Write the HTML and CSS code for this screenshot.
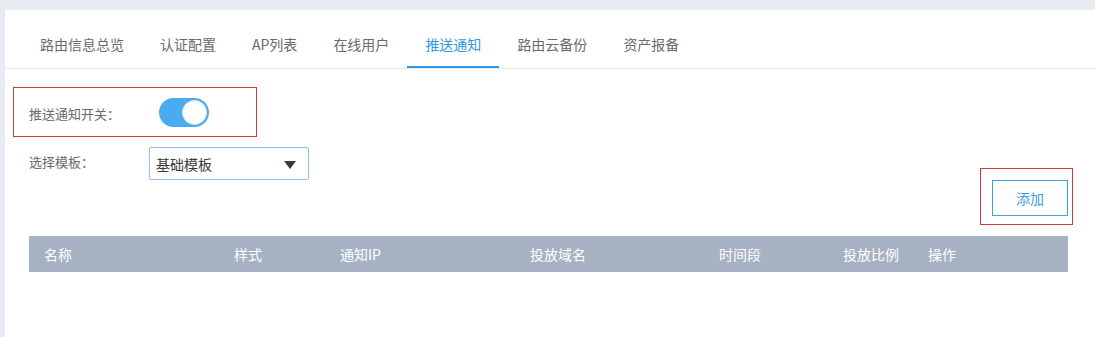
FILE: index.html
```html
<!DOCTYPE html>
<html lang="zh-CN">
<head>
<meta charset="utf-8">
<title>推送通知</title>
<link rel="stylesheet" href="styles.css">
</head>
<body>
<div class="panel">
  <nav class="tabs">
    <a class="tab">路由信息总览</a>
    <a class="tab">认证配置</a>
    <a class="tab">AP列表</a>
    <a class="tab">在线用户</a>
    <a class="tab active">推送通知</a>
    <a class="tab">路由云备份</a>
    <a class="tab">资产报备</a>
  </nav>
  <div class="toolbar">
    <div class="form">
      <div class="row switch-row">
        <span class="label label-switch">推送通知开关：</span>
        <span class="toggle"><span class="knob"></span></span>
      </div>
      <div class="row select-row">
        <span class="label label-select">选择模板：</span>
        <div class="select">
          <span class="select-text">基础模板</span>
          <span class="caret"></span>
        </div>
      </div>
    </div>
    <div class="add-wrap">
      <div class="add-box">
        <button class="add-btn">添加</button>
      </div>
    </div>
  </div>
  <div class="table-head">
    <span>名称</span>
    <span>样式</span>
    <span>通知IP</span>
    <span>投放域名</span>
    <span>时间段</span>
    <span>投放比例</span>
    <span>操作</span>
  </div>
</div>
</body>
</html>
```

FILE: styles.css
```css
html, body {
  margin: 0;
  padding: 0;
  height: 100%;
}
body {
  background: #e8ebf1;
  font-family: "Noto Sans CJK SC", "Noto Sans", sans-serif;
  padding: 10px 0 0 5px;
  box-sizing: border-box;
  overflow: hidden;
}
.panel {
  background: #ffffff;
  height: 100%;
}
.tabs {
  display: flex;
  padding: 12px 0 0 17px;
  border-bottom: 1px solid #e6e8ec;
}
.tab {
  padding: 0 18px;
  font-size: 14px;
  line-height: 44px;
  color: #6a6a6a;
  border-bottom: 2px solid transparent;
  white-space: nowrap;
}
.tab.active {
  color: #2e9ae6;
  border-bottom-color: #2e9ae6;
}
.toolbar {
  display: flex;
  justify-content: space-between;
  padding-top: 18px;
}
.form {
  display: flex;
  flex-direction: column;
  gap: 10px;
}
.row {
  display: flex;
  align-items: center;
}
.switch-row {
  margin-left: 8px;
  width: 244px;
  height: 50px;
  box-sizing: border-box;
  border: 1px solid #cf3a3f;
  padding-left: 15px;
}
.select-row {
  margin-left: 24px;
}
.label {
  font-size: 13px;
  color: #6a6a6a;
  white-space: nowrap;
}
.label-switch {
  width: 130px;
  padding-top: 2px;
}
.label-select {
  width: 120px;
  align-self: flex-start;
  padding-top: 5px;
}
.toggle {
  display: flex;
  align-items: center;
  justify-content: flex-end;
  width: 50px;
  height: 29px;
  box-sizing: border-box;
  padding: 2px;
  border-radius: 15px;
  background: #4aabf0;
}
.knob {
  width: 25px;
  height: 25px;
  box-sizing: border-box;
  border-radius: 50%;
  background: #ffffff;
  border: 1px solid #d6ebfb;
}
.select {
  display: flex;
  align-items: center;
  justify-content: space-between;
  width: 160px;
  height: 33px;
  box-sizing: border-box;
  border: 1px solid #9dbbea;
  border-radius: 2px;
  padding: 0 12px 0 6px;
  box-shadow: 0 0 1px rgba(80, 130, 220, 0.3);
}
.select-text {
  font-size: 14px;
  color: #3a3a3a;
}
.caret {
  width: 0;
  height: 0;
  border-left: 6px solid transparent;
  border-right: 6px solid transparent;
  border-top: 8px solid #333d48;
  margin-top: 2px;
}
.add-wrap {
  padding-top: 81px;
  padding-right: 22px;
}
.add-box {
  border: 1px solid #cf3a3f;
  padding: 11px 4px 8px 11px;
  width: 93px;
  height: 57px;
  box-sizing: border-box;
}
.add-btn {
  display: block;
  width: 76px;
  height: 36px;
  box-sizing: border-box;
  border: 1px solid #3fa3e0;
  background: #ffffff;
  color: #3b9be0;
  font-family: "Noto Sans CJK SC", "Noto Sans", sans-serif;
  font-size: 14px;
  padding: 0;
}
.table-head {
  display: grid;
  grid-template-columns: 190px 106px 190px 189px 124px 85px 1fr;
  margin: 11px 27px 0 24px;
  height: 36px;
  align-items: center;
  background: #a6b2c4;
  color: #ffffff;
  font-size: 14px;
}
.table-head span {
  padding-left: 15px;
  white-space: nowrap;
}
```
